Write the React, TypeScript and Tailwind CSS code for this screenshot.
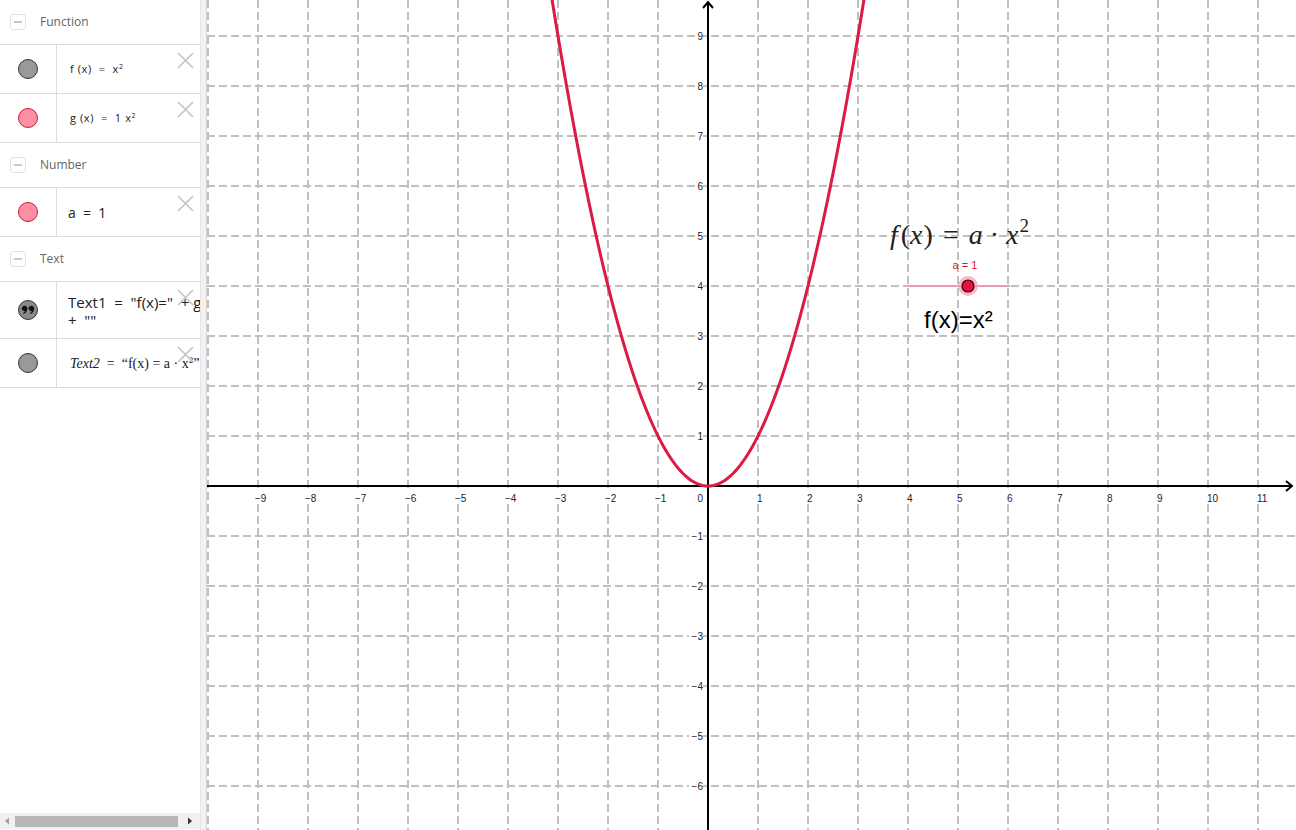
import React from 'react'

const OX = 501
const OY = 486
const U = 50

function Dot({ kind }: { kind: 'gray' | 'pink' | 'quote' }) {
  if (kind === 'quote') {
    return (
      <svg width="22" height="22" viewBox="0 0 22 22">
        <circle cx="11" cy="11" r="9.5" fill="#8a8a8a" stroke="#333" strokeWidth="1" />
        <path d="M4.6 9.6a2.9 2.9 0 1 1 5.6 1.1c-.5 2.1-1.8 3.5-3.7 4.3l-.5-.8c1-.6 1.7-1.4 1.8-2.3a2.9 2.9 0 0 1-3.2-2.3z" fill="#111" />
        <path d="M11.4 9.6a2.9 2.9 0 1 1 5.6 1.1c-.5 2.1-1.8 3.5-3.7 4.3l-.5-.8c1-.6 1.7-1.4 1.8-2.3a2.9 2.9 0 0 1-3.2-2.3z" fill="#111" />
      </svg>
    )
  }
  const fill = kind === 'gray' ? 'bg-[#999999] border-[#333333]' : 'bg-[#ff8ea0] border-[#c8183f]'
  return <div className={`w-[20px] h-[20px] rounded-full border ${fill}`} />
}

function Close() {
  return (
    <svg className="absolute right-[6px] top-[7px]" width="17" height="17" viewBox="0 0 17 17">
      <path d="M1 1L16 16M16 1L1 16" stroke="#c4c4c4" strokeWidth="1.6" />
    </svg>
  )
}

function Header({ label }: { label: string }) {
  return (
    <div className="h-[45px] flex items-center border-b border-[#dddddd] shrink-0">
      <div className="ml-[10px] w-[16px] h-[16px] rounded-[3px] border border-[#e2e2e2] flex items-center justify-center">
        <div className="w-[8px] h-[1.5px] bg-[#c8c8c8]" />
      </div>
      <span className="ml-[14px] text-[12px] text-[#666666] font-['Open_Sans',sans-serif]">{label}</span>
    </div>
  )
}

function Row({ dot, h = 49, children }: { dot: 'gray' | 'pink' | 'quote'; h?: number; children: React.ReactNode }) {
  return (
    <div className="flex border-b border-[#dddddd] relative shrink-0" style={{ height: h }}>
      <div className="w-[57px] border-r border-[#dddddd] flex items-center justify-center shrink-0">
        <Dot kind={dot} />
      </div>
      <div className="flex-1 flex items-center pl-[13px] overflow-hidden whitespace-nowrap text-[#222]">{children}</div>
      <Close />
    </div>
  )
}

function Graph() {
  const vx: number[] = []
  for (let k = -10; k <= 11; k++) vx.push(k)
  const hy: number[] = []
  for (let k = -6; k <= 9; k++) if (k !== 0) hy.push(k)

  let d = ''
  for (let i = 0; i <= 140; i++) {
    const x = -3.5 + i * 0.05
    const px = OX + U * x
    const py = OY - U * x * x
    d += (i === 0 ? 'M' : 'L') + px.toFixed(1) + ' ' + py.toFixed(1)
  }

  return (
    <svg width="1089" height="830" viewBox="0 0 1089 830" className="block">
      <g stroke="#c0c0c0" strokeWidth="2" strokeDasharray="8 4">
        {vx.map(k => k !== 0 && (
          <line key={'v' + k} x1={OX + U * k} y1={0} x2={OX + U * k} y2={830} />
        ))}
        {hy.map(k => (
          <line key={'h' + k} x1={0} y1={OY - U * k} x2={1089} y2={OY - U * k} />
        ))}
      </g>
      <g fontFamily="Liberation Sans, Arial, sans-serif" fontSize="10" fill="#222">
        {vx.map(k => k !== 0 && k !== -10 && (
          <g key={'lx' + k}>
            <rect x={OX + U * k - (k < 0 ? 4 : 2)} y={492} width={k < 0 ? 13 : k >= 10 ? 12 : 7} height={12} fill="#fff" />
            <text x={OX + U * k - (k < 0 ? 3 : 1)} y={502}>{k < 0 ? '\u2212' + -k : k}</text>
          </g>
        ))}
        {hy.map(k => (
          <g key={'ly' + k}>
            <rect x={k < 0 ? 482 : 488} y={OY - U * k - 6} width={k < 0 ? 14 : 8} height={12} fill="#fff" />
            <text x={496} y={OY - U * k + 4} textAnchor="end">{k < 0 ? '\u2212' + -k : k}</text>
          </g>
        ))}
        <text x={496} y={502} textAnchor="end">0</text>
      </g>
      <g stroke="#000" strokeWidth="2" fill="none">
        <line x1={0} y1={OY} x2={1085} y2={OY} />
        <line x1={OX} y1={830} x2={OX} y2={2} />
        <path d={`M${OX - 5} 8L${OX} 2L${OX + 5} 8`} />
        <path d={`M1079 481L1085 486L1079 491`} />
      </g>
      <path d={d} stroke="#dc1a44" strokeWidth="3" fill="none" />

      <text x={683} y={244} fontFamily="Liberation Serif, 'Times New Roman', serif" fontSize="28" fill="#222">
        <tspan fontStyle="italic">f</tspan>
        <tspan dx="3">(</tspan>
        <tspan fontStyle="italic">x</tspan>
        <tspan dx="1">)</tspan>
        <tspan dx="10">=</tspan>
        <tspan dx="10" fontStyle="italic">a</tspan>
        <tspan dx="7">·</tspan>
        <tspan dx="7" fontStyle="italic">x</tspan>
        <tspan dx="1" dy="-12" fontSize="19">2</tspan>
      </text>

      <text x={758} y={269} textAnchor="middle" fontFamily="Liberation Sans, Arial, sans-serif" fontSize="11" fill="#e0103c">a = 1</text>
      <line x1={701} y1={286} x2={803} y2={286} stroke="#f19aac" strokeWidth="2" />
      <circle cx={761} cy={286} r={10} fill="#f6a3b4" opacity="0.75" />
      <circle cx={761} cy={286} r={6} fill="#e8103c" stroke="#3a0010" strokeWidth="1.2" />

      <text x={717} y={328} fontFamily="Liberation Sans, Arial, sans-serif" fontSize="24" fill="#000">f(x)=x²</text>
    </svg>
  )
}

export default function App() {
  return (
    <div className="w-[1296px] h-[830px] flex bg-white overflow-hidden">
      <div className="w-[200px] flex flex-col relative shrink-0">
        <Header label="Function" />
        <Row dot="gray">
          <span className="text-[11px] font-['Open_Sans',sans-serif] tracking-[0.6px]">f (x) &nbsp;= &nbsp;x<sup className="text-[7px]">2</sup></span>
        </Row>
        <Row dot="pink">
          <span className="text-[11px] font-['Open_Sans',sans-serif] tracking-[0.6px]">g (x) &nbsp;= &nbsp;1 x<sup className="text-[7px]">2</sup></span>
        </Row>
        <Header label="Number" />
        <Row dot="pink">
          <span className="text-[14px] font-['Open_Sans',sans-serif] -ml-[2px]">a &nbsp;= &nbsp;1</span>
        </Row>
        <Header label="Text" />
        <Row dot="quote" h={57}>
          <div className="text-[15px] leading-[18px] font-['Open_Sans',sans-serif] -ml-[2px] mt-[2px]">
            <div>Text1 &nbsp;= &nbsp;"f(x)=" &nbsp;+ g</div>
            <div>+ &nbsp;""</div>
          </div>
        </Row>
        <Row dot="gray">
          <span className="text-[14px] font-['Liberation_Serif',serif]">
            <i>Text2</i> &nbsp;= &nbsp;“f(x) = a · x<sup className="text-[9px]">2</sup>”
          </span>
        </Row>
        <div className="flex-1" />
        <div className="h-[16px] mb-[1px] bg-[#f0f0f0] flex items-center shrink-0">
          <svg width="15" height="16" viewBox="0 0 15 16"><path d="M9 4.5L5 8L9 11.5z" fill="#a0a0a0" /></svg>
          <div className="w-[163px] h-[11px] bg-[#b7b7b7]" />
          <div className="flex-1 flex justify-center">
            <svg width="15" height="16" viewBox="0 0 15 16"><path d="M6 4.5L10 8L6 11.5z" fill="#333" /></svg>
          </div>
        </div>
      </div>
      <div className="w-[7px] shrink-0 bg-[#f2f2f2] border-l border-[#e6e6e6] border-r border-r-[#d6d6d6]" />
      <div className="flex-1 relative">
        <Graph />
      </div>
    </div>
  )
}
